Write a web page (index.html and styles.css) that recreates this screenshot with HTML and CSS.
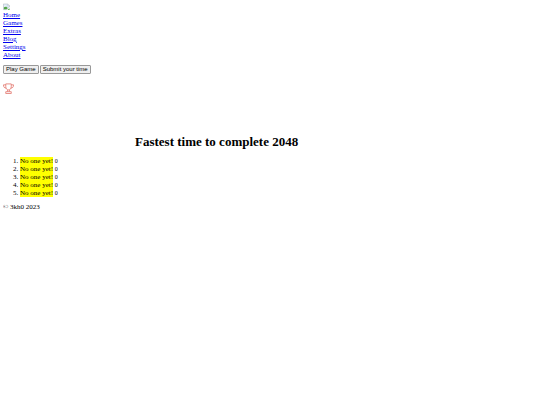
FILE: index.html
```html
<!DOCTYPE html>
<html lang="en">
<head>
    <meta charset="UTF-8">
    <meta name="viewport" content="width=device-width, initial-scale=1.0">
    <title>2048 Leaderboard</title>
    <link rel="stylesheet" href="styles.css">
</head>
<body>

<nav>
    <a class="logo" href="#" aria-label="Logo">
        <svg viewBox="0 0 16 16">
            <path d="M1 1h10l4 4v3l-4 3-3 3H1z" fill="#dce9f8" stroke="#a3a9ae"/>
            <path d="M2 13V9l4-3 5 4-3 3z" fill="#52a447"/>
            <path d="M3 5h4v2H3z" fill="#fff"/>
            <path d="M11 1v4h4" fill="#fff" stroke="#a3a9ae"/>
            <path d="M10 15l5-4v4z" fill="#52a447"/>
        </svg>
    </a>
    <a href="#">Home</a>
    <a href="#">Games</a>
    <a href="#">Extras</a>
    <a href="#">Blog</a>
    <a href="#">Settings</a>
    <a href="#">About</a>
</nav>

<div class="buttons">
    <button type="button">Play Game</button>
    <button type="button">Submit your time</button>
</div>

<main>
    <svg class="trophy" viewBox="0 0 24 24">
        <path d="M6 2h12v6c0 4-2 7-6 7s-6-3-6-7zM6 4H1c0 5 2 7 6 7M18 4h5c0 5-2 7-6 7M10 15v4M14 15v4M6 19h12v4H6z"/>
    </svg>

    <h1>Fastest time to complete 2048</h1>

    <ol>
        <li><mark>No one yet!</mark> <small>0</small></li>
        <li><mark>No one yet!</mark> <small>0</small></li>
        <li><mark>No one yet!</mark> <small>0</small></li>
        <li><mark>No one yet!</mark> <small>0</small></li>
        <li><mark>No one yet!</mark> <small>0</small></li>
    </ol>
</main>

<footer>© 3kh0 2023</footer>

</body>
</html>
```
FILE: styles.css
```css
body {
    font-family: "Liberation Serif", "Times New Roman", serif;
    font-size: 7px;
    line-height: 8px;
    margin: 3px;
    color: #000;
    background-color: #fff;
}

nav {
    display: flex;
    flex-direction: column;
    align-items: flex-start;
}

a {
    color: #0000ee;
}

.logo svg {
    display: block;
    width: 7px;
    height: 8px;
}

.buttons {
    display: flex;
    gap: 1px;
    margin-top: 6px;
}

button {
    font-family: "Liberation Sans", Arial, sans-serif;
    font-size: 6px;
    line-height: 7px;
    padding: 0 2px;
    color: #000;
    background-color: #efefef;
    border: 1px solid #999;
    border-radius: 1px;
}

.trophy {
    display: block;
    width: 11px;
    height: 11px;
    margin-top: 9px;
    fill: none;
    stroke: #e5837c;
    stroke-width: 2;
}

h1 {
    font-size: 13px;
    line-height: 16px;
    margin: 40px 0 7px;
    padding-left: 132px;
}

ol {
    margin: 0 0 6px;
    padding-left: 17px;
}

mark {
    background-color: #ffff00;
    color: #000;
}

small {
    font-size: 6px;
    line-height: 6px;
}
```
